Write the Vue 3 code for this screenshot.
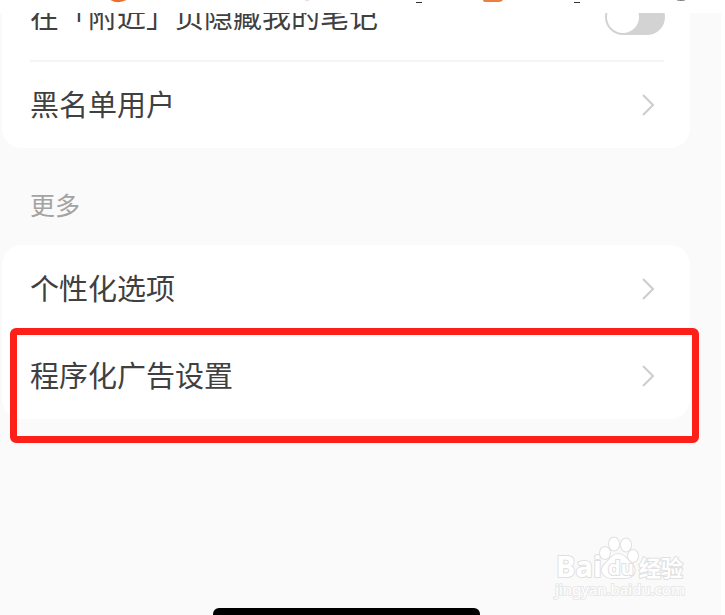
<script setup>
import { ref } from 'vue'

const hideNotes = ref(false)
const moreRows = [
  { id: 'personal', label: '个性化选项', marked: false },
  { id: 'ads', label: '程序化广告设置', marked: true },
]
</script>

<template>
  <div class="page">
    <header class="strip" aria-hidden="true">
      <svg width="725" height="13" viewBox="0 0 725 13">
        <path d="M111 -1Q118 3 126 -1" fill="none" stroke="#e8702f" stroke-width="2.4" />
        <path d="M305 0h4" stroke="#c8c8c8" />
        <path d="M416 2.5h6M574 2.5h6" stroke="#333" />
        <path d="M483 0h20q-1 2-4 2h-13q-3 0-3-2z" fill="#ee7d42" />
        <path d="M677 0q4 1 8 0" fill="none" stroke="#777" />
      </svg>
    </header>

    <main class="screen">
      <section class="card card-top">
        <div class="row">
          <label class="text" for="hide-notes">在「附近」页隐藏我的笔记</label>
          <input id="hide-notes" v-model="hideNotes" class="switch" type="checkbox" role="switch" />
        </div>
        <hr class="divider" />
        <a class="row" href="#blocked">
          <span class="text">黑名单用户</span>
          <svg class="chevron" viewBox="0 0 12 22"><path d="M1 1l10 10L1 21" /></svg>
        </a>
      </section>

      <h2 class="heading">更多</h2>

      <section class="card">
        <a v-for="row in moreRows" :key="row.id" class="row" :class="{ marked: row.marked }" :href="'#' + row.id">
          <span class="text">{{ row.label }}</span>
          <svg class="chevron" viewBox="0 0 12 22"><path d="M1 1l10 10L1 21" /></svg>
        </a>
      </section>

      <div class="home-bar"></div>

      <svg class="watermark" viewBox="0 0 140 70">
        <g class="mark">
          <text x="5" y="43" class="latin">Bai</text>
          <ellipse cx="54" cy="19" rx="5" ry="6" />
          <ellipse cx="63" cy="10" rx="5" ry="6.5" />
          <ellipse cx="75" cy="11" rx="5" ry="6.5" />
          <ellipse cx="82" cy="22" rx="5" ry="6" />
          <path d="M67 20c-5 0-8 5-12 9-5 4-5 9-2 12 3 4 9 3 14 3s11 1 15-3c3-3 2-8-2-12s-7-9-13-9z" />
          <text x="57" y="41" class="du">du</text>
          <text x="88" y="42" class="cjk">经验</text>
        </g>
        <text x="4" y="61" class="url">jingyan.baidu.com</text>
      </svg>
    </main>
  </div>
</template>

<style>
body {
  margin: 0;
  background: #fff;
}
</style>

<style scoped>
.page {
  display: flex;
  flex-direction: column;
  height: 100vh;
  overflow: hidden;
  font-family: "Noto Sans CJK SC", sans-serif;
  color: #404040;
}

.strip {
  flex: none;
  height: 13px;
  overflow: hidden;
}

.strip svg {
  display: block;
}

.screen {
  position: relative;
  display: flex;
  flex: 1;
  flex-direction: column;
  min-height: 0;
  margin-right: 4px;
  padding-right: 31px;
  padding-left: 2px;
  overflow: hidden;
  background: #fafafa;
}

.card {
  flex: none;
  border-radius: 20px;
  background: #fff;
}

.card-top {
  margin-top: -40px;
}

.row {
  position: relative;
  display: flex;
  align-items: center;
  justify-content: space-between;
  box-sizing: border-box;
  height: 87px;
  padding: 0 36px 0 28px;
  color: inherit;
  font-size: 29px;
  line-height: 40px;
  text-decoration: none;
}

.text {
  padding-bottom: 4px;
}

.card-top .row:first-child {
  padding-right: 25px;
}

.divider {
  height: 2px;
  margin: 0 26px 0 28px;
  border: 0;
  background: #f5f5f5;
}

.card-top .row:last-child {
  height: 86px;
}

.chevron {
  width: 12px;
  height: 22px;
  fill: none;
  stroke: #cdcdcd;
  stroke-width: 2;
}

.switch {
  width: 60px;
  height: 36px;
  margin: 0;
  border-radius: 18px;
  appearance: none;
  background: #d3d3d3;
}

.switch::before {
  display: block;
  width: 32px;
  height: 32px;
  margin: 2px;
  border-radius: 50%;
  background: #fff;
  content: "";
}

.switch:checked {
  background: #f33;
}

.switch:checked::before {
  margin-left: 26px;
}

.heading {
  flex: none;
  margin: 36px 0 21px 28px;
  color: #a3a3a3;
  font-size: 25px;
  font-weight: 400;
  line-height: 40px;
}

.marked::after {
  position: absolute;
  inset: -4px -9px -24px 8px;
  border: 7px solid #fc2018;
  border-radius: 6px;
  content: "";
}

.home-bar {
  flex: none;
  align-self: center;
  width: 267px;
  height: 12px;
  margin-top: auto;
  margin-bottom: -5px;
  border-radius: 6px;
  background: #000;
}

.watermark {
  position: absolute;
  right: 30px;
  bottom: 11px;
  width: 140px;
  height: 70px;
}

.mark {
  fill: #fff;
  stroke: #e0e0e0;
  stroke-width: 2;
  paint-order: stroke;
}

.latin {
  font: 700 29px "Open Sans", sans-serif;
}

.du {
  font: 700 20px "Open Sans", sans-serif;
}

.cjk {
  font: 700 22px "Noto Sans CJK SC", sans-serif;
}

.url {
  fill: #fff;
  stroke: #e8e8e8;
  stroke-width: 2;
  paint-order: stroke;
  font: 400 15px "Noto Sans", sans-serif;
}
</style>
